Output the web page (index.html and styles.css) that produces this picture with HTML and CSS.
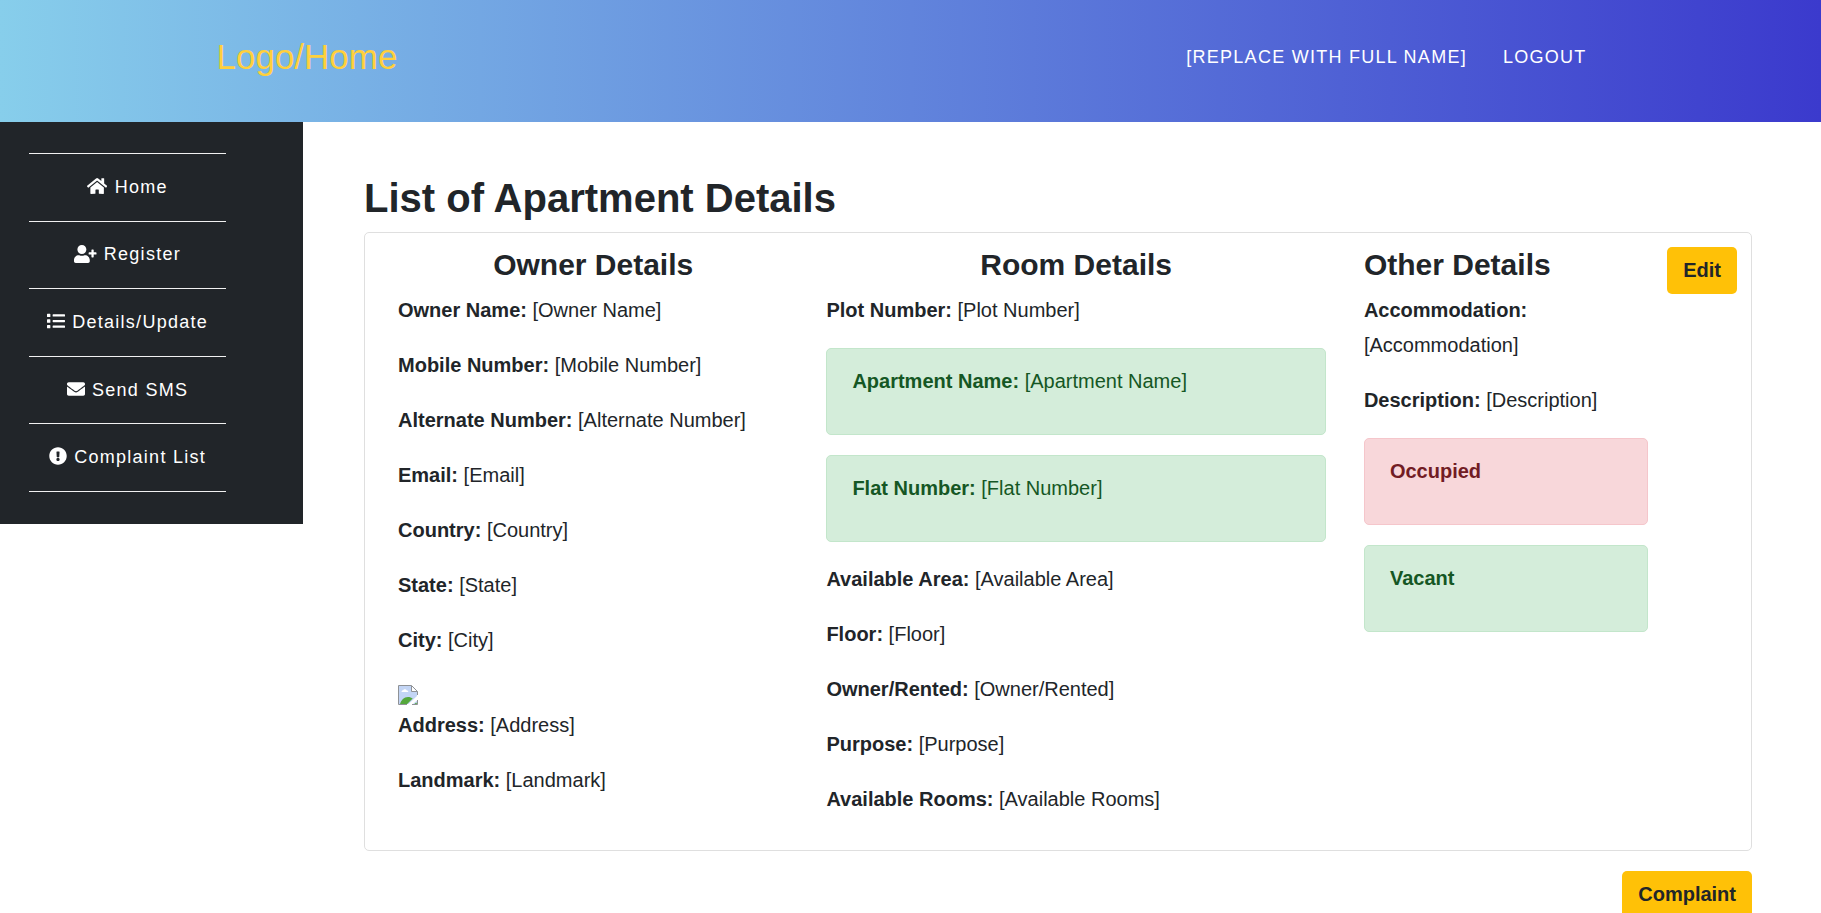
FILE: index.html
```html
<!DOCTYPE html>
<html lang="en">
<head>
<meta charset="utf-8">
<meta name="viewport" content="width=device-width, initial-scale=1">
<title>List of Apartment Details</title>
<link rel="stylesheet" href="styles.css">
</head>
<body>
<header class="site-header">
  <div class="header-inner">
    <a class="brand" href="#">Logo/Home</a>
    <nav class="top-nav">
      <a href="#">[Replace with full name]</a>
      <a href="#">Logout</a>
    </nav>
  </div>
</header>
<div class="layout">
  <nav class="sidebar">
    <ul class="side-list">
      <li><a href="#"><svg class="icon icon-home" viewBox="0 0 576 512" aria-hidden="true"><path d="M280.37 148.26L96 300.11V464a16 16 0 0 0 16 16l112.06-.29a16 16 0 0 0 15.92-16V368a16 16 0 0 1 16-16h64a16 16 0 0 1 16 16v95.64a16 16 0 0 0 16 16.05L464 480a16 16 0 0 0 16-16V300L295.67 148.26a12.19 12.19 0 0 0-15.3 0zM571.6 251.47L488 182.56V44.05a12 12 0 0 0-12-12h-56a12 12 0 0 0-12 12v72.61L318.47 43a48 48 0 0 0-61 0L4.34 251.47a12 12 0 0 0-1.6 16.9l25.5 31A12 12 0 0 0 45.15 301l235.22-193.74a12.19 12.19 0 0 1 15.3 0L530.9 301a12 12 0 0 0 16.9-1.6l25.5-31a12 12 0 0 0-1.7-16.93z"/></svg> Home</a></li>
      <li><a href="#"><svg class="icon icon-user" viewBox="0 0 640 512" aria-hidden="true"><path d="M624 208h-64v-64c0-8.8-7.2-16-16-16h-32c-8.8 0-16 7.2-16 16v64h-64c-8.8 0-16 7.2-16 16v32c0 8.8 7.2 16 16 16h64v64c0 8.8 7.2 16 16 16h32c8.8 0 16-7.2 16-16v-64h64c8.8 0 16-7.2 16-16v-32c0-8.8-7.2-16-16-16zm-400 48c70.7 0 128-57.3 128-128S294.7 0 224 0 96 57.3 96 128s57.3 128 128 128zm89.6 32h-16.7c-22.2 10.2-46.9 16-72.9 16s-50.6-5.8-72.9-16h-16.7C60.2 288 0 348.2 0 422.4V464c0 26.5 21.5 48 48 48h352c26.5 0 48-21.5 48-48v-41.6c0-74.2-60.2-134.4-134.4-134.4z"/></svg> Register</a></li>
      <li><a href="#"><svg class="icon" viewBox="0 0 512 512" aria-hidden="true"><path d="M80 368H16a16 16 0 0 0-16 16v64a16 16 0 0 0 16 16h64a16 16 0 0 0 16-16v-64a16 16 0 0 0-16-16zm0-320H16A16 16 0 0 0 0 64v64a16 16 0 0 0 16 16h64a16 16 0 0 0 16-16V64a16 16 0 0 0-16-16zm0 160H16a16 16 0 0 0-16 16v64a16 16 0 0 0 16 16h64a16 16 0 0 0 16-16v-64a16 16 0 0 0-16-16zm416 176H176a16 16 0 0 0-16 16v32a16 16 0 0 0 16 16h320a16 16 0 0 0 16-16v-32a16 16 0 0 0-16-16zm0-320H176a16 16 0 0 0-16 16v32a16 16 0 0 0 16 16h320a16 16 0 0 0 16-16V80a16 16 0 0 0-16-16zm0 160H176a16 16 0 0 0-16 16v32a16 16 0 0 0 16 16h320a16 16 0 0 0 16-16v-32a16 16 0 0 0-16-16z"/></svg> Details/Update</a></li>
      <li><a href="#"><svg class="icon" viewBox="0 0 512 512" aria-hidden="true"><path d="M502.3 190.8c3.9-3.1 9.7-.2 9.7 4.7V400c0 26.5-21.5 48-48 48H48c-26.5 0-48-21.5-48-48V195.6c0-5 5.7-7.8 9.7-4.7 22.4 17.4 52.1 39.5 154.1 113.6 21.1 15.4 56.7 47.8 92.2 47.6 35.7.3 72-32.8 92.3-47.6 102-74.1 131.6-96.3 154-113.7zM256 320c23.2.4 56.6-29.2 73.4-41.4 132.7-96.3 142.8-104.7 173.4-128.7 5.8-4.5 9.2-11.5 9.2-18.9v-19c0-26.5-21.5-48-48-48H48c-26.5 0-48 21.5-48 48v19c0 7.4 3.4 14.3 9.2 18.9 30.6 23.9 40.7 32.4 173.4 128.7 16.8 12.2 50.2 41.8 73.4 41.4z"/></svg> Send SMS</a></li>
      <li><a href="#"><svg class="icon" viewBox="0 0 512 512" aria-hidden="true"><path d="M504 256c0 136.997-111.043 248-248 248S8 392.997 8 256C8 119.083 119.043 8 256 8s248 111.083 248 248zm-248 50c-25.405 0-46 20.595-46 46s20.595 46 46 46 46-20.595 46-46-20.595-46-46-46zm-43.673-165.346l7.418 136c.347 6.364 5.609 11.346 11.982 11.346h48.546c6.373 0 11.635-4.982 11.982-11.346l7.418-136c.375-6.874-5.098-12.654-11.982-12.654h-63.383c-6.884 0-12.356 5.78-11.981 12.654z"/></svg> Complaint List</a></li>
    </ul>
  </nav>
  <main class="content">
    <h1 class="page-title">List of Apartment Details</h1>
    <div class="card">
      <div class="details">
        <section>
          <h2 class="col-title centered">Owner Details</h2>
          <p><b>Owner Name:</b> [Owner Name]</p>
          <p><b>Mobile Number:</b> [Mobile Number]</p>
          <p><b>Alternate Number:</b> [Alternate Number]</p>
          <p><b>Email:</b> [Email]</p>
          <p><b>Country:</b> [Country]</p>
          <p><b>State:</b> [State]</p>
          <p><b>City:</b> [City]</p>
          <div class="photo">
            <svg class="photo-missing" viewBox="0 0 20 20" role="img" aria-label="Photo unavailable">
              <path fill="#c3d5f5" d="M1 1h12.500l5.500 5.500V11L10.500 19H1z"/>
              <path fill="#fff" d="M3.500 7c0-1.200.8-1.800 1.700-1.800.4-1.100 2.900-1.300 3.300.1 1.200 0 1.800.8 1.800 1.700z"/>
              <path fill="#55a83c" d="M2 19c1-3.700 4-7 8-7 1.900 0 3.600.7 4.700 1.600L9.200 19z"/>
              <path fill="#c3d5f5" d="M19 15.500V19h-4z"/>
              <path fill="#55a83c" d="M18.300 17.500L19 19h-2.500z"/>
              <path fill="#fff" d="M13.500 1l5.500 5.500h-5.500z"/>
              <path fill="none" stroke="#8f9296" d="M9 19.500H.5V.5h13l6 6V10M13.500.5v6h6M19.500 15v4.500H14"/>
            </svg>
          </div>
          <p><b>Address:</b> [Address]</p>
          <p><b>Landmark:</b> [Landmark]</p>
        </section>
        <section>
          <h2 class="col-title centered">Room Details</h2>
          <p><b>Plot Number:</b> [Plot Number]</p>
          <div class="alert success"><p><b>Apartment Name:</b> [Apartment Name]</p></div>
          <div class="alert success"><p><b>Flat Number:</b> [Flat Number]</p></div>
          <p><b>Available Area:</b> [Available Area]</p>
          <p><b>Floor:</b> [Floor]</p>
          <p><b>Owner/Rented:</b> [Owner/Rented]</p>
          <p><b>Purpose:</b> [Purpose]</p>
          <p><b>Available Rooms:</b> [Available Rooms]</p>
        </section>
        <section>
          <h2 class="col-title">Other Details</h2>
          <p><b>Accommodation:</b> [Accommodation]</p>
          <p><b>Description:</b> [Description]</p>
          <div class="alert danger"><p><b>Occupied</b></p></div>
          <div class="alert success"><p><b>Vacant</b></p></div>
        </section>
      </div>
      <button class="btn" type="button">Edit</button>
    </div>
    <div class="actions">
      <button class="btn" type="button">Complaint</button>
    </div>
  </main>
</div>
</body>
</html>
```
FILE: styles.css
```css
*, *::before, *::after { box-sizing: border-box; }

body {
  margin: 0;
  background: #fff;
  color: #212529;
  font: 20px/30px "Liberation Sans", Arial, sans-serif;
}

a { color: inherit; text-decoration: none; }

.site-header {
  padding: 30px 20px 38px;
  background: linear-gradient(to right, #87ceeb, #3b3acd);
}

.header-inner {
  display: flex;
  align-items: center;
  justify-content: space-between;
  max-width: 1388px;
  margin: 0 auto;
}

.brand { color: #ffd03c; font-size: 35px; line-height: 54px; }

.top-nav { display: flex; color: #fff; }

.top-nav a {
  padding: 0 18px;
  font-size: 18px;
  letter-spacing: 0.07em;
  text-transform: uppercase;
}

.layout {
  display: grid;
  grid-template-columns: 303fr 1518fr;
  align-items: start;
}

.sidebar { padding: 31px 77px 32px 29px; background: #212529; }

.side-list {
  margin: 0;
  padding: 0;
  border-top: 1px solid #f1f1f1;
  list-style: none;
}

.side-list li { border-bottom: 1px solid #f1f1f1; }

.side-list a {
  display: block;
  padding: 1.1em 0;
  color: #fff;
  font-size: 18px;
  line-height: 27px;
  letter-spacing: 0.07em;
  text-align: center;
  white-space: nowrap;
}

.icon {
  width: 1em;
  height: 1em;
  margin-right: 1px;
  fill: currentColor;
  vertical-align: -0.125em;
}

.icon-home { width: 1.125em; }
.icon-user { width: 1.25em; }

.content { min-width: 0; padding: 52px 69px 20px 61px; }

.page-title { margin: 0 0 10px; font-size: 40px; line-height: 48px; }

.card {
  display: flex;
  align-items: flex-start;
  gap: 19px;
  padding: 14px 14px 13px 33px;
  border: 1px solid #dfdfdf;
  border-radius: 5px;
}

.details {
  display: grid;
  flex: 1;
  grid-template-columns: 390fr 499fr 284fr;
  gap: 38px;
}

.col-title { margin: 0 0 10px; font-size: 30px; line-height: 36px; }
.centered { text-align: center; }

.details p { margin: 0 0 20px; line-height: 35px; }

.photo-missing { width: 20px; height: 20px; vertical-align: middle; }

.alert {
  margin-bottom: 20px;
  padding: 15px 25px;
  border: 1px solid;
  border-radius: 5px;
}

.success { background: #d4edda; border-color: #c3e6cb; color: #155724; }
.danger { background: #f8d7da; border-color: #f5c6cb; color: #721c24; }

.btn {
  padding: 8px 16px 9px;
  border: 0;
  border-radius: 5px;
  background: #ffc107;
  color: #212529;
  font: inherit;
  font-weight: bold;
}

.actions { display: flex; justify-content: flex-end; margin-top: 20px; }
```
